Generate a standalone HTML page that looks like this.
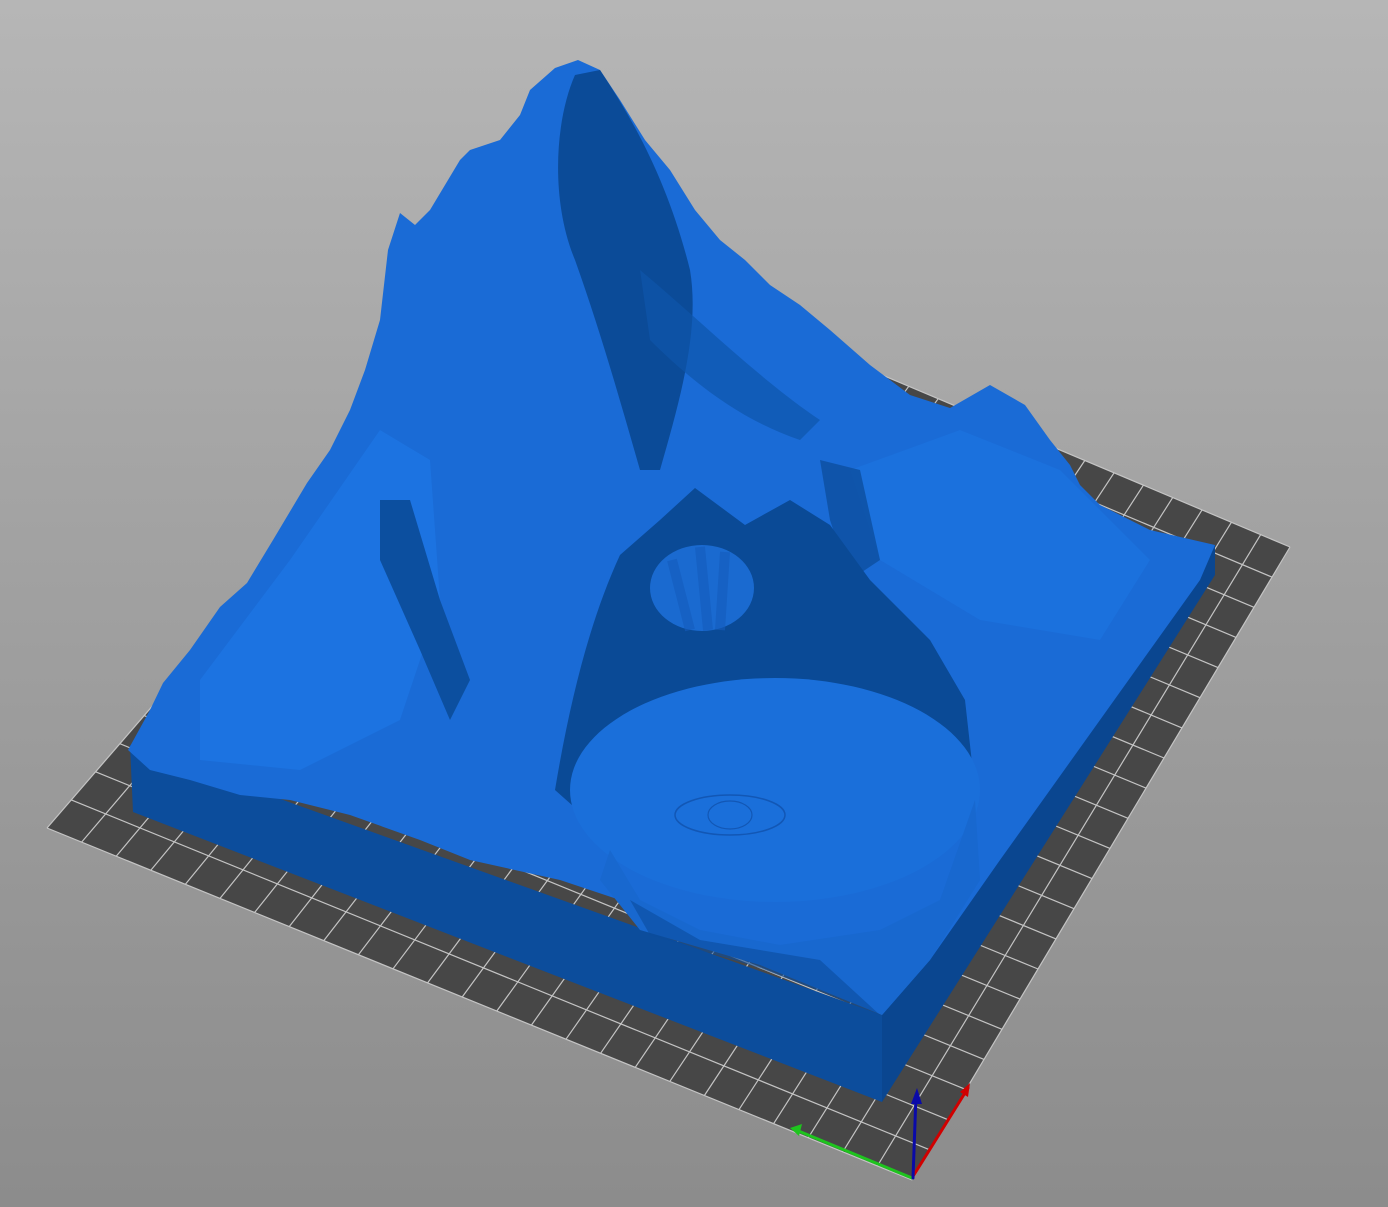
<!DOCTYPE html>
<html><head><meta charset="utf-8"><style>
html,body{margin:0;padding:0;width:1388px;height:1207px;overflow:hidden}
body{background:linear-gradient(#b6b6b6,#a4a4a4 40%,#8c8c8c)}
svg{position:absolute;left:0;top:0}
</style></head><body>
<svg id="s" width="1388" height="1207" viewBox="0 0 1388 1207">
<polygon points="912,1180 47,828 557,238 1290,547" fill="#474747"/>
<g id="grid" stroke="#c4c4c4" stroke-width="1.2" fill="none"></g>
<polygon points="130,745 882,1015 882,1102 133,812" fill="#0c4d9c"/>
<polygon points="882,1015 1215,545 1215,575 882,1102" fill="#0a4690"/>
<polygon fill="#1a6bd6" points="128,750 150,710 163,683 190,650 220,607 247,583 273,540 307,483 330,450 350,410 365,370 380,320 388,250 400,213 415,225 430,210 460,160 470,150 500,140 520,115 530,90 555,68 578,60 600,70 620,100 645,140 670,170 695,210 720,240 745,260 770,285 800,305 830,330 870,365 910,395 950,408 990,385 1025,405 1050,440 1070,465 1080,485 1100,505 1150,530 1215,545 1200,580 1100,720 1000,860 930,960 882,1015 850,1000 760,960 680,930 620,900 560,880 470,860 420,840 350,815 290,800 240,795 190,780 150,770"/>
<polygon fill="#1d76e4" opacity=".8" points="200,680 290,560 380,430 430,460 440,600 400,720 300,770 200,760"/>
<polygon fill="#1d74e0" opacity=".7" points="850,470 960,430 1060,470 1150,560 1100,640 980,620 880,560"/>
<path fill="#0b4b98" d="M575,75 C555,120 550,200 575,260 C600,330 620,400 640,470 L660,470 C680,400 700,330 690,270 C670,190 640,130 600,70 Z"/>
<path fill="#0e55ab" opacity=".7" d="M640,270 C700,320 760,380 820,420 L800,440 C740,420 690,380 650,340Z"/>
<path fill="#0c4f9f" d="M380,500 L410,500 440,600 470,680 450,720 420,650 380,560Z"/>
<path fill="#0c4f9f" opacity=".8" d="M820,460 L860,470 880,560 850,580 830,520Z"/>
<path fill="#0a4a96" d="M555,790 C570,700 590,620 620,555 L660,520 L695,488 L745,525 L790,500 L830,525 L870,580 L930,640 L965,700 L975,790 L960,830 L600,830 Z"/>
<ellipse cx="775" cy="790" rx="205" ry="112" fill="#1a6fda"/>
<path fill="#1868cf" d="M610,850 L640,900 L700,930 L780,945 L880,930 L940,900 L975,800 L980,880 L930,960 L882,1015 L760,965 L640,930 L600,880Z"/>
<path fill="#0c4d9c" d="M630,900 L700,940 L820,960 L880,1015 L760,968 L650,935Z" opacity=".6"/>
<ellipse cx="730" cy="815" rx="55" ry="20" fill="none" stroke="#1257b5" stroke-width="1.5"/>
<ellipse cx="730" cy="815" rx="22" ry="14" fill="none" stroke="#1257b5" stroke-width="1.2"/>
<ellipse cx="702" cy="588" rx="52" ry="43" fill="#1a6ad0"/>
<path d="M672,560 L690,630 M700,547 L708,630 M725,552 L720,630" stroke="#145cbd" stroke-width="10" opacity=".6"/>
<g stroke-linecap="round">
<line x1="912" y1="1178" x2="968" y2="1088" stroke="#d00000" stroke-width="3"/>
<polygon points="970,1083 960,1092 968,1097" fill="#d00000"/>
<line x1="912" y1="1178" x2="796" y2="1130" stroke="#1ec41e" stroke-width="3"/>
<polygon points="790,1128 802,1124 799,1136" fill="#1ec41e"/>
<line x1="913" y1="1178" x2="916" y2="1095" stroke="#0a0aa8" stroke-width="3"/>
<polygon points="917,1088 911,1104 922,1104" fill="#0a0aa8"/>
</g>
</svg>
<script>
(function(){
var B=[912,1180],L=[47,828],T=[557,238],R=[1290,547];
function lp(a,b,t){return [a[0]+(b[0]-a[0])*t,a[1]+(b[1]-a[1])*t];}
var d="";
for(var i=0;i<=21;i++){var p=lp(B,R,i/21),q=lp(L,T,i/21);d+="M"+p[0].toFixed(1)+" "+p[1].toFixed(1)+"L"+q[0].toFixed(1)+" "+q[1].toFixed(1);}
for(var j=0;j<=25;j++){var p=lp(B,L,j/25),q=lp(R,T,j/25);d+="M"+p[0].toFixed(1)+" "+p[1].toFixed(1)+"L"+q[0].toFixed(1)+" "+q[1].toFixed(1);}
var e=document.createElementNS("http://www.w3.org/2000/svg","path");e.setAttribute("d",d);
document.getElementById("grid").appendChild(e);
})();
</script>
</body></html>
